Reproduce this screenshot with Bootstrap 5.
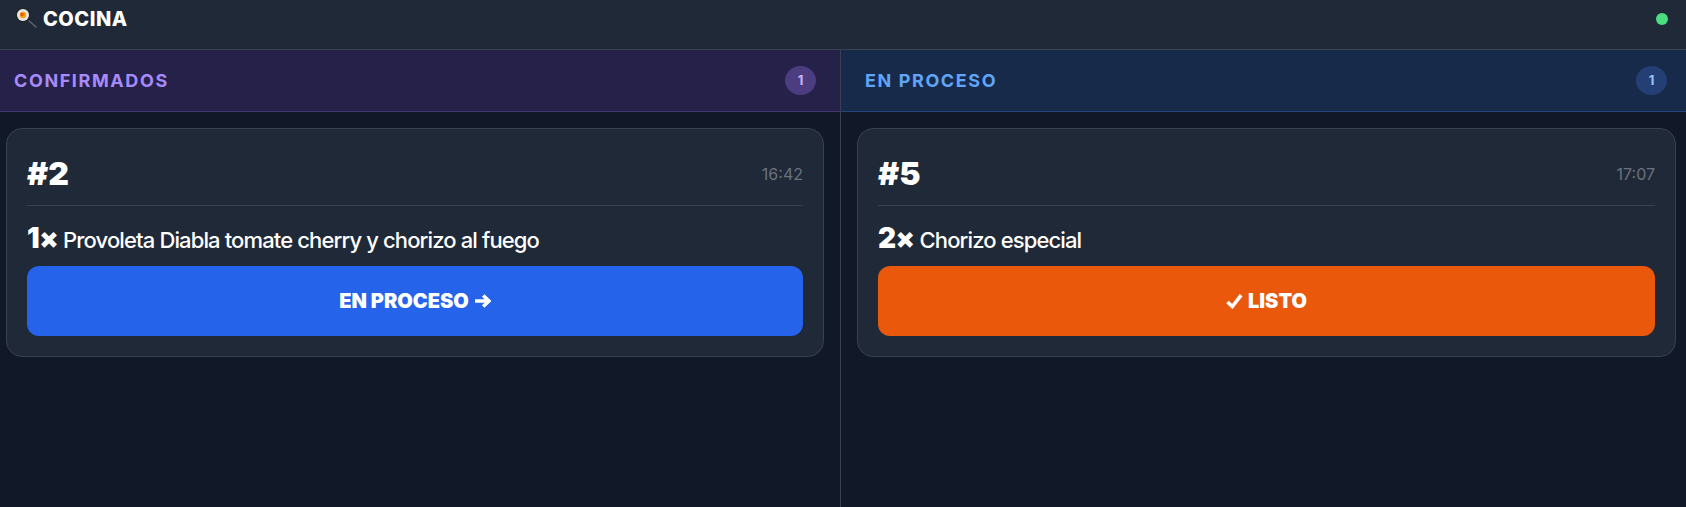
<!DOCTYPE html>
<html lang="es">
<head>
<meta charset="utf-8">
<title>Cocina</title>
<link href="https://cdn.jsdelivr.net/npm/bootstrap@5.3.0/dist/css/bootstrap.min.css" rel="stylesheet">
<style>
html,body{height:100%;}
body{background:#111827;font-family:Inter,"Liberation Sans",sans-serif;color:#fff;overflow:hidden;}
.kds{height:507px;}
.topbar{height:50px;background:#1f2937;border-bottom:1px solid #374151;padding:0 18px 12px 15px;}
.brand{font-size:20px;font-weight:800;letter-spacing:.5px;line-height:38px;gap:6px;}
.pan{width:22px;height:22px;margin-top:-1px;}
.live{width:12px;height:12px;background:#4ade80;border-radius:50%;}
.board{height:457px;}
.lane{width:841px;flex:none;}
.lane-a{border-right:1px solid #374151;}
.lane-b{flex:1 1 auto;width:auto;}
.lane-top{height:62px;border-bottom:1px solid;}
.lane-a .lane-top{background:#252149;border-color:#44366f;padding:0 24px 0 14px;}
.lane-b .lane-top{background:#172a4a;border-color:#26457c;padding:0 19px 0 24px;}
.lane-name{font-size:18px;font-weight:700;letter-spacing:1.6px;}
.lane-a .lane-name{color:#a78bfa;}
.lane-b .lane-name{color:#60a5fa;}
.tally{width:31px;height:29px;border-radius:50%;font-size:13px;font-weight:700;}
.lane-a .tally{background:#4c3d80;color:#c4b5fd;}
.lane-b .tally{background:#233f74;color:#93c5fd;}
.lane-a .lane-body{padding:16px 16px 0 6px;}
.lane-b .lane-body{padding:16px 10px 0 16px;}
.ticket{background:#1f2937;border:1px solid #374151;border-radius:16px;padding:20px;}
.ticket-head{height:57px;padding-bottom:6px;border-bottom:1px solid #374151;}
.ticket-no{font-size:32px;font-weight:900;line-height:38px;}
.ticket-time{font-size:16px;color:#6b7280;}
.line-item{font-size:22px;font-weight:500;line-height:30px;margin-top:17px;letter-spacing:-.87px;}
.qty{font-size:28px;font-weight:900;letter-spacing:-.5px;}
.act{width:100%;height:70px;border:0;border-radius:12px;color:#fff;font-size:20px;font-weight:900;margin-top:11px;gap:5px;}
.act-blue,.act-blue:hover{background:#2563eb;color:#fff;}
.act-orange,.act-orange:hover{background:#ea580c;color:#fff;}
.glyph{flex:none;fill:none;stroke:#fff;stroke-width:3.6;}
</style>
</head>
<body>
<div class="kds d-flex flex-column">
  <header class="topbar d-flex justify-content-between align-items-center">
    <div class="brand d-flex align-items-center">
      <svg class="pan" viewBox="0 0 22 22" aria-hidden="true">
        <line x1="13" y1="13" x2="21" y2="20" stroke="#5b6470" stroke-width="1.6" stroke-linecap="round"/>
        <circle cx="8" cy="8" r="8" fill="#23272c"/>
        <circle cx="8" cy="8" r="6" fill="#e6e8e6"/>
        <circle cx="8" cy="8" r="3.2" fill="#f59e0b"/>
        <circle cx="7" cy="7.5" r="1.8" fill="#ea580c"/>
      </svg>
      <span>COCINA</span>
    </div>
    <span class="live"></span>
  </header>
  <main class="board d-flex">
    <section class="lane lane-a">
      <div class="lane-top d-flex justify-content-between align-items-center">
        <span class="lane-name">CONFIRMADOS</span>
        <span class="tally d-flex justify-content-center align-items-center">1</span>
      </div>
      <div class="lane-body">
        <article class="ticket">
          <div class="ticket-head d-flex justify-content-between align-items-center">
            <span class="ticket-no">#2</span>
            <span class="ticket-time">16:42</span>
          </div>
          <div class="line-item"><span class="qty">1×</span> Provoleta Diabla tomate cherry y chorizo al fuego</div>
          <button class="btn act act-blue d-flex justify-content-center align-items-center" type="button">
            <span>EN PROCESO</span>
            <svg class="glyph" width="17" height="14" viewBox="0 0 17 14" aria-hidden="true"><path d="M1 7H15M9.2 1.5L15 7L9.2 12.5"/></svg>
          </button>
        </article>
      </div>
    </section>
    <section class="lane lane-b">
      <div class="lane-top d-flex justify-content-between align-items-center">
        <span class="lane-name">EN PROCESO</span>
        <span class="tally d-flex justify-content-center align-items-center">1</span>
      </div>
      <div class="lane-body">
        <article class="ticket">
          <div class="ticket-head d-flex justify-content-between align-items-center">
            <span class="ticket-no">#5</span>
            <span class="ticket-time">17:07</span>
          </div>
          <div class="line-item"><span class="qty">2×</span> Chorizo especial</div>
          <button class="btn act act-orange d-flex justify-content-center align-items-center" type="button">
            <svg class="glyph" width="17" height="15" viewBox="0 0 17 15" aria-hidden="true"><path d="M1.5 8L6.3 12.5L15.2 1.2"/></svg>
            <span>LISTO</span>
          </button>
        </article>
      </div>
    </section>
  </main>
</div>
<script src="https://cdn.jsdelivr.net/npm/bootstrap@5.3.0/dist/js/bootstrap.bundle.min.js"></script>
</body>
</html>
